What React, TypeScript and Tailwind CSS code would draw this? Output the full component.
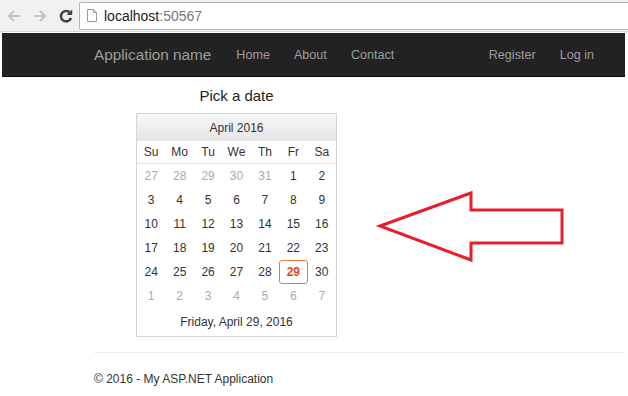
const days = ["Su", "Mo", "Tu", "We", "Th", "Fr", "Sa"];

type Cell = { d: number; muted?: boolean; selected?: boolean };

const weeks: Cell[][] = [
  [{ d: 27, muted: true }, { d: 28, muted: true }, { d: 29, muted: true }, { d: 30, muted: true }, { d: 31, muted: true }, { d: 1 }, { d: 2 }],
  [{ d: 3 }, { d: 4 }, { d: 5 }, { d: 6 }, { d: 7 }, { d: 8 }, { d: 9 }],
  [{ d: 10 }, { d: 11 }, { d: 12 }, { d: 13 }, { d: 14 }, { d: 15 }, { d: 16 }],
  [{ d: 17 }, { d: 18 }, { d: 19 }, { d: 20 }, { d: 21 }, { d: 22 }, { d: 23 }],
  [{ d: 24 }, { d: 25 }, { d: 26 }, { d: 27 }, { d: 28 }, { d: 29, selected: true }, { d: 30 }],
  [{ d: 1, muted: true }, { d: 2, muted: true }, { d: 3, muted: true }, { d: 4, muted: true }, { d: 5, muted: true }, { d: 6, muted: true }, { d: 7, muted: true }],
];

function BrowserBar() {
  return (
    <div className="h-[32px] bg-[#f1f1f1] flex items-center border-b border-[#d6d6d6]">
      {/* Back / Forward / Reload */}
      <div className="w-[79px] flex items-center pl-[6px] gap-[10px]">
        <svg width="16" height="16" viewBox="0 0 16 16" fill="none" stroke="#c4c4c4" strokeWidth="2.2">
          <path d="M14 8H3M8 3L3 8l5 5" />
        </svg>
        <svg width="16" height="16" viewBox="0 0 16 16" fill="none" stroke="#c4c4c4" strokeWidth="2.2">
          <path d="M2 8h11M8 3l5 5-5 5" />
        </svg>
        <svg width="16" height="16" viewBox="0 0 16 16" fill="none" stroke="#444" strokeWidth="2.6">
          <path d="M12.6 5.5A5.2 5.2 0 1 0 13 10" />
          <path d="M13.6 2v4.4H9.2" fill="#444" strokeWidth="1.2" />
        </svg>
      </div>
      {/* Address bar */}
      <div className="flex-1 h-[28px] bg-white border border-[#b5b5b5] border-r-0 rounded-l-[2px] flex items-center pl-[6px]">
        <svg width="12" height="15" viewBox="0 0 12 15" fill="none" stroke="#9a9a9a" strokeWidth="1">
          <path d="M1.5 1.5h6l3 3v9h-9z" />
          <path d="M7.5 1.5v3h3" />
        </svg>
        <span className="ml-[6px] text-[14px] leading-none text-[#222] font-['Liberation_Sans',Arial,sans-serif]">
          localhost<span className="text-[#777]">:50567</span>
        </span>
      </div>
    </div>
  );
}

function Navbar() {
  return (
    <div className="h-[44px] ml-[2px] mr-[3px] mt-[1px] pt-[2px] bg-[#222] border-b border-[#080808] flex items-center pl-[92px] pr-[31px] text-[#9d9d9d]">
      <span className="text-[15.3px]">Application name</span>
      <div className="flex items-center gap-[24px] ml-[25px] text-[12.6px]">
        <span>Home</span>
        <span>About</span>
        <span>Contact</span>
      </div>
      <div className="flex-1" />
      <div className="flex items-center gap-[24px] text-[12.6px]">
        <span>Register</span>
        <span>Log in</span>
      </div>
    </div>
  );
}

function Calendar() {
  return (
    <div className="w-[201px] border border-[#d5d5d5] bg-white">
      <div className="h-[27px] flex items-center justify-center text-[12px] text-[#333] bg-gradient-to-b from-[#f7f7f7] to-[#e6e6e6]">
        April 2016
      </div>
      <div className="grid grid-cols-7 h-[23px] items-center border-b border-[#e2e2e2] text-[12px] text-[#333]">
        {days.map((d) => (
          <div key={d} className="text-center">
            {d}
          </div>
        ))}
      </div>
      {weeks.map((w, i) => (
        <div key={i} className="grid grid-cols-7 h-[24px] text-[12px]">
          {w.map((c, j) => (
            <div
              key={j}
              className={
                c.selected
                  ? "flex items-center justify-center border border-[#e8793a] rounded-[3px] font-bold text-[#df4a1d]"
                  : c.muted
                  ? "flex items-center justify-center text-[#aaa]"
                  : "flex items-center justify-center text-[#333]"
              }
            >
              {c.d}
            </div>
          ))}
        </div>
      ))}
      <div className="h-[28px] flex items-center justify-center text-[12px] text-[#333]">
        Friday, April 29, 2016
      </div>
    </div>
  );
}

export default function App() {
  return (
    <div className="relative w-[628px] h-[396px] bg-white overflow-hidden font-['Liberation_Sans',Arial,sans-serif]">
      <BrowserBar />
      <Navbar />

      {/* Main content */}
      <div className="pl-[136px] pt-[10px]">
        <h3 className="w-[201px] text-center text-[15px] leading-[17px] text-[#222]">Pick a date</h3>
        <div className="mt-[9px]">
          <Calendar />
        </div>
      </div>

      {/* Footer */}
      <div className="ml-[94px] mr-[3px] mt-[15px] border-t border-[#eee]" />
      <div className="pl-[94px] mt-[19px] text-[12px] leading-[14px] text-[#333]">© 2016 - My ASP.NET Application</div>

      {/* Red annotation arrow */}
      <svg className="absolute left-[370px] top-[185px]" width="200" height="85" viewBox="370 185 200 85">
        <polygon
          points="380,226 471,193 471,210 562,210 562,243 471,243 471,260"
          fill="none"
          stroke="#e4202a"
          strokeWidth="3"
          strokeLinejoin="miter"
        />
      </svg>
    </div>
  );
}
